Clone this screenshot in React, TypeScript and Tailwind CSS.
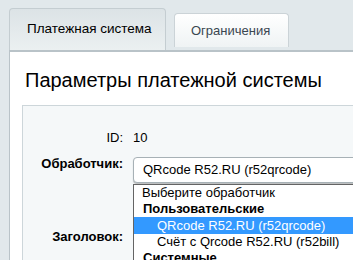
import React from "react";

const font = { fontFamily: '"Liberation Sans", Arial, sans-serif' };

function Tabs() {
  return (
    <div className="flex items-start pl-[9px] gap-[8px]">
      <div className="h-[42px] w-[157px] shrink-0 rounded-t-[4px] border border-b-0 border-[#c4cdd1] bg-gradient-to-b from-[#dce3e6] to-[#ebf0f1] flex items-center pl-[17px] text-[13.5px] text-black">
        Платежная система
      </div>
      <div className="mt-[5px] h-[34px] w-[115px] shrink-0 rounded-t-[4px] border border-b-0 border-[#cbd3d7] bg-gradient-to-b from-[#ffffff] to-[#eff3f4] flex items-center pl-[16px] text-[13px] text-[#3a4650]">
        Ограничения
      </div>
    </div>
  );
}

function Dropdown() {
  return (
    <div className="absolute left-0 top-[calc(100%+1px)] w-[400px] border border-[#646464] bg-white text-[13px] leading-[16px] text-black">
      <div className="pl-[8px] h-[16px]">Выберите обработчик</div>
      <div className="pl-[9px] h-[16px] font-bold">Пользовательские</div>
      <div className="pl-[23px] h-[17px] bg-[#3399ff] text-white leading-[17px]">
        QRcode R52.RU (r52qrcode)
      </div>
      <div className="pl-[23px] h-[16px]">Счёт с Qrcode R52.RU (r52bill)</div>
      <div className="pl-[9px] h-[16px] font-bold">Системные</div>
    </div>
  );
}

export default function App() {
  return (
    <div
      className="w-[353px] h-[260px] overflow-hidden bg-[#e1e8eb] pt-[8px]"
      style={font}
    >
      <Tabs />
      <div className="ml-[9px] border-t-2 border-l border-[#b9c3c8] bg-white h-[300px] w-[400px] pt-[15px]">
        <h1 className="pl-[15px] text-[20px] leading-[26px] text-black whitespace-nowrap">
          Параметры платежной системы
        </h1>
        <div className="mt-[12px] ml-[12px] border border-[#cdd6da] bg-[#f5f8f9] h-[300px] pt-[24px] text-[13px] leading-[16px] text-black">
          <div className="flex">
            <div className="w-[100px] shrink-0 text-right">ID:</div>
            <div className="ml-[10px]">10</div>
          </div>
          <div className="flex mt-[10px]">
            <div className="w-[100px] shrink-0 text-right font-bold">Обработчик:</div>
            <div className="ml-[10px] relative mt-[1px] shrink-0">
              <div className="h-[26px] w-[400px] rounded-[4px] border border-[#a7b1b6] bg-white shadow-[0_1px_1px_rgba(0,0,0,0.25)] flex items-center pl-[9px] text-[13px]">
                QRcode R52.RU (r52qrcode)
              </div>
              <Dropdown />
            </div>
          </div>
          <div className="flex mt-[46px]">
            <div className="w-[100px] shrink-0 text-right font-bold">Заголовок:</div>
          </div>
        </div>
      </div>
    </div>
  );
}
